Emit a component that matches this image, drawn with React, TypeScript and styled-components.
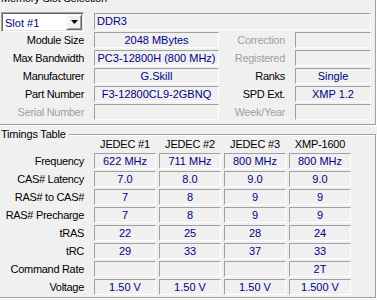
import React from 'react';
import styled, { createGlobalStyle } from 'styled-components';

const navy = '#000080';

const GlobalStyle = createGlobalStyle`
  html, body {
    margin: 0;
    padding: 0;
    background: #f0f0f0;
    overflow: hidden;
  }
`;

const Page = styled.div`
  width: 377px;
  height: 300px;
  overflow: hidden;

  background: #f0f0f0;
  font-family: "Liberation Sans", Arial, sans-serif;
  font-size: 11px;
  color: #000;
`;

// Etched Win32 group box: dark line with a white line beside it.
const GroupBox = styled.section<{ $gap: number; $padTop: number; $padBottom: number }>`
  position: relative;
  box-sizing: border-box;
  width: 381px;
  margin: ${(p) => p.$gap}px 0 0 -5px;
  padding: ${(p) => p.$padTop}px 0 ${(p) => p.$padBottom}px 4px;

  border: 1px solid #a0a0a0;
  box-shadow: inset 1px 1px 0 #fff, 1px 1px 0 #fff;
`;

const GroupTitle = styled.span`
  position: absolute;
  top: -7px;
  left: 4px;
  padding: 0 3px 0 1px;

  background: #f0f0f0;
  line-height: 13px;
  letter-spacing: -0.2px;
  white-space: nowrap;
`;

const SlotGrid = styled.div`
  display: grid;
  grid-template-columns: 84px 125px 56px 76px;
  grid-template-rows: 18px repeat(5, 16px);
  column-gap: 10px;
  row-gap: 2px;
`;

const TimingsGrid = styled.div`
  display: grid;
  grid-template-columns: 91px repeat(4, 62px);
  grid-template-rows: 16px repeat(8, 16px);
  column-gap: 3px;
  row-gap: 2px;
`;

const Label = styled.div<{ $disabled?: boolean; $pad?: number }>`
  padding-right: ${(p) => p.$pad ?? 0}px;
  line-height: 16px;
  letter-spacing: -0.3px;
  text-align: right;
  white-space: nowrap;
  color: ${(p) => (p.$disabled ? '#a0a0a0' : '#000')};
`;

const ColumnHead = styled.div`
  padding-top: 3px;
  line-height: 13px;
  letter-spacing: -0.2px;
  text-align: center;
  white-space: nowrap;
`;

const Value = styled.div<{ $left?: boolean; $span?: number }>`
  box-sizing: border-box;
  height: 16px;
  padding-left: ${(p) => (p.$left ? 2 : 0)}px;
  overflow: hidden;
  grid-column: ${(p) => (p.$span ? `span ${p.$span}` : 'auto')};

  border: 1px solid;
  border-color: #a0a0a0 #fff #fff #a0a0a0;
  color: ${navy};
  line-height: 14px;
  text-align: ${(p) => (p.$left ? 'left' : 'center')};
  white-space: nowrap;
`;

const TypeValue = styled(Value)`
  height: 17px;
  margin-top: 1px;
  line-height: 15px;
`;

const Combo = styled.div`
  box-sizing: border-box;
  display: flex;
  align-items: center;
  width: 83px;
  height: 20px;
  margin-left: 1px;
  padding: 0 1px 0 3px;

  background: #fff;
  border: 1px solid;
  border-color: #a0a0a0 #fff #fff #a0a0a0;
  box-shadow: inset 1px 1px 0 #696969, inset -1px -1px 0 #e3e3e3;
  color: ${navy};
`;

const ComboText = styled.span`
  flex: 1;
  padding-top: 1px;
  line-height: 14px;
`;

const ArrowButton = styled.div`
  box-sizing: border-box;
  display: flex;
  align-items: center;
  justify-content: center;
  width: 16px;
  height: 16px;

  background: #f0f0f0;
  border: 1px solid;
  border-color: #f0f0f0 #696969 #696969 #f0f0f0;
  box-shadow: inset 1px 1px 0 #fff, inset -1px -1px 0 #a0a0a0;
`;

const timingColumns = ['JEDEC #1', 'JEDEC #2', 'JEDEC #3', 'XMP-1600'];

const timingRows: [string, string[]][] = [
  ['Frequency', ['622 MHz', '711 MHz', '800 MHz', '800 MHz']],
  ['CAS# Latency', ['7.0', '8.0', '9.0', '9.0']],
  ['RAS# to CAS#', ['7', '8', '9', '9']],
  ['RAS# Precharge', ['7', '8', '9', '9']],
  ['tRAS', ['22', '25', '28', '24']],
  ['tRC', ['29', '33', '37', '33']],
  ['Command Rate', ['', '', '', '2T']],
  ['Voltage', ['1.50 V', '1.50 V', '1.50 V', '1.500 V']],
];

const moduleRows: [string, string, string, string, boolean][] = [
  ['Module Size', '2048 MBytes', 'Correction', '', true],
  ['Max Bandwidth', 'PC3-12800H (800 MHz)', 'Registered', '', true],
  ['Manufacturer', 'G.Skill', 'Ranks', 'Single', false],
  ['Part Number', 'F3-12800CL9-2GBNQ', 'SPD Ext.', 'XMP 1.2', false],
  ['Serial Number', '', 'Week/Year', '', true],
];

function App() {
  return (
    <Page>
      <GlobalStyle />

      <GroupBox $gap={-2} $padTop={13} $padBottom={4}>
        <GroupTitle>Memory Slot Selection</GroupTitle>
        <SlotGrid>
          <Combo>
            <ComboText>Slot #1</ComboText>
            <ArrowButton>
              <svg width="7" height="4" viewBox="0 0 7 4">
                <polygon points="0,0 7,0 3.5,4" fill="#000" />
              </svg>
            </ArrowButton>
          </Combo>
          <TypeValue $left $span={3}>DDR3</TypeValue>

          {moduleRows.map(([label, value, sideLabel, sideValue, sideDisabled]) => (
            <React.Fragment key={label}>
              <Label $disabled={label === 'Serial Number'}>{label}</Label>
              <Value>{value}</Value>
              <Label $disabled={sideDisabled}>{sideLabel}</Label>
              <Value>{sideValue}</Value>
            </React.Fragment>
          ))}
        </SlotGrid>
      </GroupBox>

      <GroupBox $gap={9} $padTop={0} $padBottom={2}>
        <GroupTitle>Timings Table</GroupTitle>
        <TimingsGrid>
          <div />
          {timingColumns.map((col) => (
            <ColumnHead key={col}>{col}</ColumnHead>
          ))}

          {timingRows.map(([label, values]) => (
            <React.Fragment key={label}>
              <Label $pad={7}>{label}</Label>
              {values.map((v, i) => (
                <Value key={i}>{v}</Value>
              ))}
            </React.Fragment>
          ))}
        </TimingsGrid>
      </GroupBox>
    </Page>
  );
}

export default App;
